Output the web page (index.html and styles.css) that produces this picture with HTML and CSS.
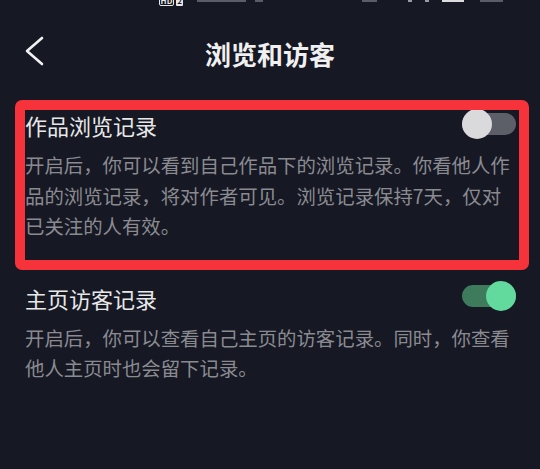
FILE: index.html
```html
<!DOCTYPE html>
<html lang="zh-CN">
<head>
    <meta charset="UTF-8">
    <meta name="viewport" content="width=device-width, initial-scale=1.0">
    <title>浏览和访客</title>
    <link rel="stylesheet" href="styles.css">
</head>
<body>
    <div class="status">
        <span class="hd">HD</span>
        <span class="sim">2</span>
        <span class="dash dash-a"></span>
        <span class="dash dash-b"></span>
        <span class="dash dash-c"></span>
        <span class="dash dash-d"></span>
        <span class="dash dash-e"></span>
        <span class="dash dash-bar"></span>
        <span class="dash dash-f"></span>
    </div>

    <div class="header">
        <svg class="back" width="20" height="36" viewBox="0 0 20 36">
            <path d="M17 2 L2 15 L17 28" fill="none" stroke="#f2f2f2" stroke-width="2.6" stroke-linecap="round" stroke-linejoin="round"/>
        </svg>
        <h2>浏览和访客</h2>
        <span></span>
    </div>

    <div class="section first">
        <div class="row">
            <span class="title">作品浏览记录</span>
            <span class="switch"><span class="knob"></span></span>
        </div>
        <p class="desc">开启后，你可以看到自己作品下的浏览记录。你看他人作品的浏览记录，将对作者可见。浏览记录保持7天，仅对已关注的人有效。</p>
        <div class="mark"></div>
    </div>

    <div class="section second">
        <div class="row">
            <span class="title">主页访客记录</span>
            <span class="switch on"><span class="knob"></span></span>
        </div>
        <p class="desc">开启后，你可以查看自己主页的访客记录。同时，你查看他人主页时也会留下记录。</p>
    </div>
</body>
</html>
```

FILE: styles.css
```css
body {
    margin: 0;
    background-color: #161823;
    color: #e8e8e9;
    font-family: "Noto Sans CJK SC", "Noto Sans", sans-serif;
    width: 540px;
    height: 469px;
    overflow: hidden;
}
.status {
    height: 8px;
    overflow: hidden;
    display: flex;
    align-items: flex-start;
}
.hd {
    margin-left: 159px;
    width: 15px;
    height: 11px;
    margin-top: -5px;
    box-sizing: border-box;
    border: 1px solid #e8e8e8;
    border-radius: 2px;
    font-size: 8px;
    font-weight: 700;
    line-height: 9px;
    text-align: center;
    color: #e8e8e8;
}
.sim {
    margin-left: 2px;
    width: 7px;
    height: 11px;
    margin-top: -5px;
    background-color: #e8e8e8;
    border-radius: 1px;
    font-size: 8px;
    font-weight: 700;
    line-height: 11px;
    text-align: center;
    color: #161823;
}
.dash {
    height: 2px;
    background-color: #5a5c66;
}
.dash-a { margin-left: 14px; width: 49px; }
.dash-b { margin-left: 9px; width: 8px; }
.dash-c { margin-left: 99px; width: 15px; }
.dash-d { margin-left: 31px; width: 4px; background-color: #9a9ba1; }
.dash-e { margin-left: 13px; width: 4px; background-color: #9a9ba1; }
.dash-bar { margin-left: 13px; width: 22px; background-color: #dcdcdf; }
.dash-f { margin-left: 16px; width: 23px; }

.header {
    height: 92px;
    display: grid;
    grid-template-columns: 60px 1fr 60px;
    align-items: center;
}
.back {
    margin-left: 25px;
}
.header h2 {
    margin: 0;
    text-align: center;
    font-size: 26px;
    font-weight: 700;
    color: #f0f0f1;
    line-height: 36px;
}

.section {
    position: relative;
    padding: 0 24px 0 25px;
}
.section.first {
    margin-top: 10px;
}
.section.second {
    margin-top: 41px;
}
.row {
    height: 30px;
    display: flex;
    align-items: center;
    justify-content: space-between;
}
.title {
    font-size: 22px;
    line-height: 30px;
    color: #e8e8e9;
}
.desc {
    margin: 10px 0 0;
    font-size: 19.4px;
    line-height: 30.5px;
    color: #8a8b91;
}

.switch {
    position: relative;
    width: 54px;
    height: 22px;
    margin-bottom: 3px;
    border-radius: 11px;
    background-color: #5d5f68;
}
.switch .knob {
    position: absolute;
    top: -4px;
    left: 0;
    width: 30px;
    height: 30px;
    border-radius: 50%;
    background-color: #dadadd;
}
.switch.on {
    background-color: #3e7a5c;
}
.switch.on .knob {
    left: auto;
    right: 0;
    background-color: #62d99d;
}

.mark {
    position: absolute;
    left: 15px;
    top: -10px;
    width: 514px;
    height: 170px;
    box-sizing: border-box;
    border: 10.5px solid #f6323a;
    border-radius: 7px;
}
```
